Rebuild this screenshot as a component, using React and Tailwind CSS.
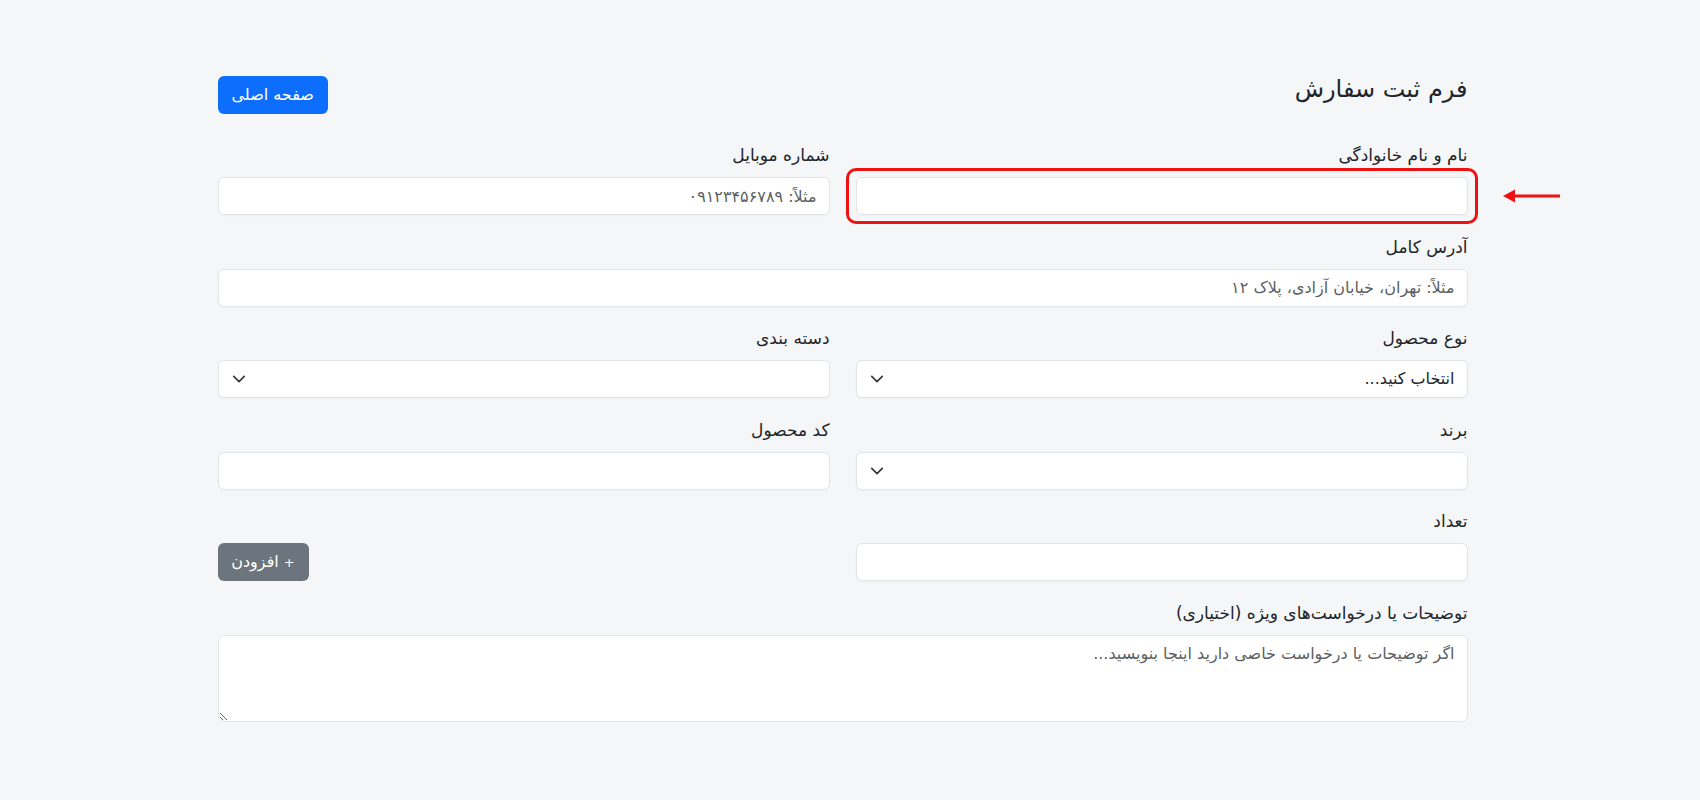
import React from 'react';

// --- Form field config ---
const inputCls =
    'block w-full h-[38px] rounded-md border border-[#e1e4e8] bg-white px-3 text-[16px] text-[#212529] placeholder:text-[#5c5f62] outline-none shadow-[0_1px_2px_rgba(0,0,0,0.03)]';

const Label = ({ children }) => (
    <label className="block text-[17px] leading-[28px] text-[#212529] mb-2">{children}</label>
);

const Chevron = () => (
    <svg
        className="pointer-events-none absolute left-[14px] top-1/2 -translate-y-1/2"
        width="14"
        height="14"
        viewBox="0 0 16 16"
        fill="none"
        stroke="#343a40"
        strokeWidth="2"
        strokeLinecap="round"
        strokeLinejoin="round"
    >
        <path d="m2 5 6 6 6-6" />
    </svg>
);

const Select = ({ children }) => (
    <div className="relative">
        <select className={`${inputCls} appearance-none pl-10`} defaultValue="">
            {children}
        </select>
        <Chevron />
    </div>
);

const Field = ({ label, children }) => (
    <div className="mb-[17.6px]">
        <Label>{label}</Label>
        {children}
    </div>
);

export default function App() {
    return (
        <div
            dir="rtl"
            className="min-h-screen bg-[#f5f6f8] text-[#212529] pr-[15px]"
            style={{ fontFamily: '"DejaVu Sans", "Noto Sans", sans-serif' }}
        >
            <div className="w-[1250px] mx-auto pt-[76px]">
                {/* Header */}
                <div className="flex justify-between items-start mb-[27px]">
                    <h1 className="text-[24px] leading-[26px] font-normal">فرم ثبت سفارش</h1>
                    <button className="h-[38px] px-[14px] rounded-md bg-[#0d6efd] text-white text-[16px]">
                        صفحه اصلی
                    </button>
                </div>

                <div className="grid grid-cols-2 gap-x-[26px]">
                    {/* Name with highlight */}
                    <Field label="نام و نام خانوادگی">
                        <div className="relative">
                            <input className={inputCls} />
                            <div className="pointer-events-none absolute -inset-x-[10px] -inset-y-[9px] rounded-[10px] border-[3px] border-[#ee1111]" />
                            <svg
                                className="absolute left-full ml-[34px] top-1/2 -translate-y-1/2"
                                width="60"
                                height="16"
                                viewBox="0 0 60 16"
                            >
                                <path d="M58 8H12" stroke="#ee1111" strokeWidth="3" />
                                <path d="M1 8 13 1.5v13z" fill="#ee1111" />
                            </svg>
                        </div>
                    </Field>

                    <Field label="شماره موبایل">
                        <input className={inputCls} placeholder="مثلاً: ۰۹۱۲۳۴۵۶۷۸۹" />
                    </Field>

                    <div className="col-span-2">
                        <Field label="آدرس کامل">
                            <input className={inputCls} placeholder="مثلاً: تهران، خیابان آزادی، پلاک ۱۲" />
                        </Field>
                    </div>

                    <Field label="نوع محصول">
                        <Select>
                            <option value="">انتخاب کنید...</option>
                        </Select>
                    </Field>

                    <Field label="دسته بندی">
                        <Select>
                            <option value=""></option>
                        </Select>
                    </Field>

                    <Field label="برند">
                        <Select>
                            <option value=""></option>
                        </Select>
                    </Field>

                    <Field label="کد محصول">
                        <input className={inputCls} />
                    </Field>

                    <Field label="تعداد">
                        <input className={inputCls} type="number" />
                    </Field>

                    <div className="flex items-end justify-end mb-[17.6px]">
                        <button className="h-[38px] w-[91px] rounded-md bg-[#6c757d] text-white text-[16px]">
                            <span className="text-[13px]">+</span> افزودن
                        </button>
                    </div>

                    <div className="col-span-2">
                        <Field label="توضیحات یا درخواست‌های ویژه (اختیاری)">
                            <textarea
                                rows={3}
                                className="block w-full h-[87px] rounded-md border border-[#e1e4e8] bg-white px-3 py-[6px] text-[16px] leading-6 placeholder:text-[#5c5f62] outline-none"
                                placeholder="اگر توضیحات یا درخواست خاصی دارید اینجا بنویسید..."
                            />
                        </Field>
                    </div>
                </div>
            </div>
        </div>
    );
}
